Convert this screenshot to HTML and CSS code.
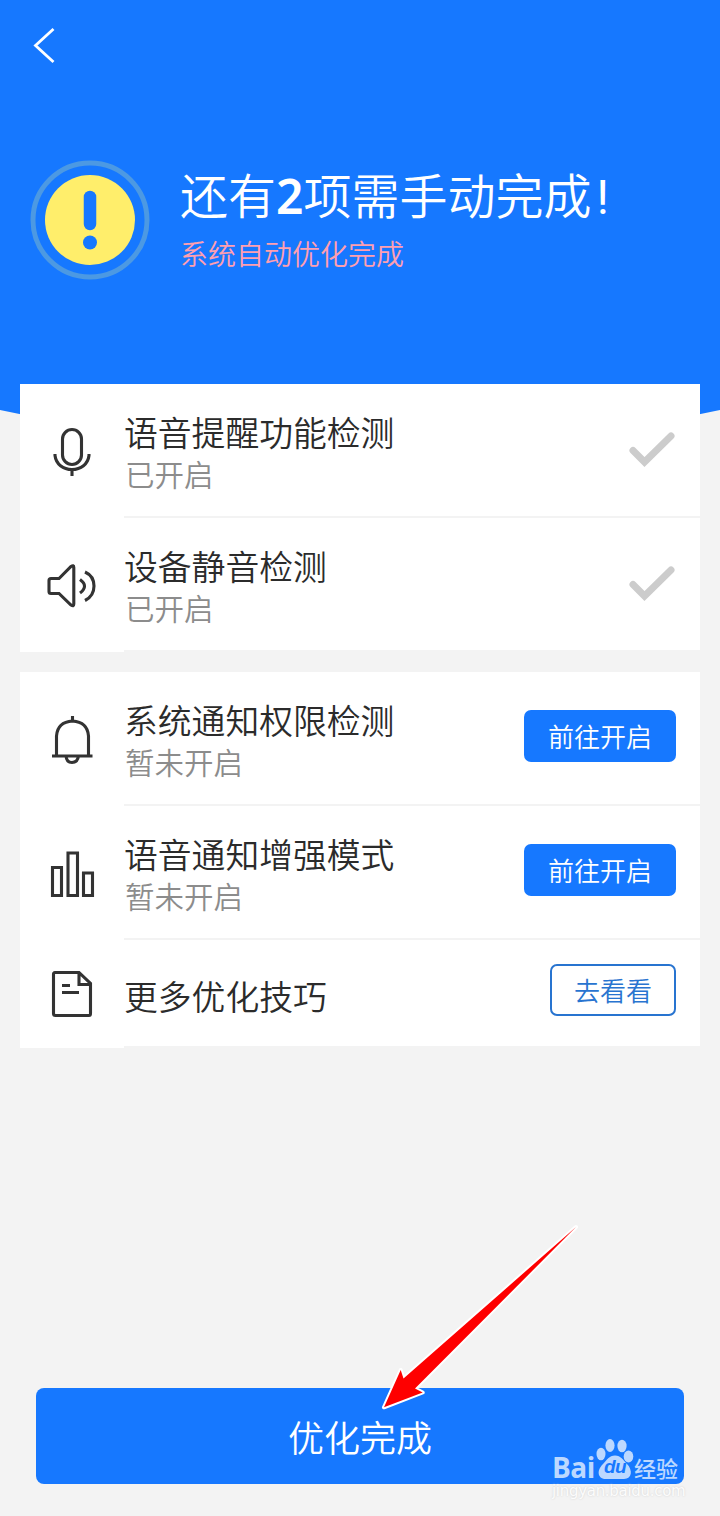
FILE: index.html
```html
<!DOCTYPE html>
<html lang="zh-CN">
<head>
    <meta charset="UTF-8">
    <meta name="viewport" content="width=device-width, initial-scale=1.0">
    <title>优化检测</title>
    <link rel="stylesheet" href="styles.css">
</head>
<body>

    <!-- Header -->
    <div class="header">
        <svg class="curve" viewBox="0 0 720 60" width="720" height="60"><path d="M0 0H720V26Q360 106 0 26Z" fill="#1678ff"/></svg>
        <div class="topbar">
            <svg class="back" width="24" height="38" viewBox="0 0 24 38"><path d="M21.500 2L3.500 18.500L21.500 35" fill="none" stroke="#fff" stroke-width="2.800"/></svg>
        </div>
        <div class="status">
            <svg width="120" height="120" viewBox="0 0 120 120">
                <circle cx="60" cy="60" r="57" fill="none" stroke="#4c99e3" stroke-width="5"/>
                <circle cx="60" cy="60" r="45" fill="#ffee6b"/>
                <path d="M60 37V64" stroke="#1678ff" stroke-width="12.5" stroke-linecap="round"/>
                <circle cx="60" cy="82.5" r="7" fill="#1678ff"/>
            </svg>
            <div class="status-text">
                <h1>还有<b>2</b>项需手动完成<span class="mark">!</span></h1>
                <p>系统自动优化完成</p>
            </div>
        </div>
    </div>

    <!-- Finished checks -->
    <div class="card">
        <div class="row">
            <svg class="icon" viewBox="0 0 56 56">
                <rect x="18.500" y="5.500" width="19" height="35" rx="9.5"/>
                <path d="M11 30V31.500C12 40 19 45.500 28 45.500S44 40 45 31.500V30M28 45.500V52"/>
            </svg>
            <div class="row-body">
                <div class="row-text">
                    <h2>语音提醒功能检测</h2>
                    <p>已开启</p>
                </div>
                <svg class="check" width="46" height="36" viewBox="0 0 46 36"><path d="M4 18.500L15.500 30L42 4"/></svg>
            </div>
        </div>
        <div class="row">
            <svg class="icon" viewBox="0 0 56 56">
                <path d="M5 22.500Q5 20.500 7 20.500H15L27 8.500Q29.800 6.500 29.800 9.500V46Q29.800 49 27 47L15 35.500H7Q5 35.500 5 33.500ZM36 21.500Q45 28 36 35M41 14Q50 18 50 28T41 42.500"/>
            </svg>
            <div class="row-body">
                <div class="row-text">
                    <h2>设备静音检测</h2>
                    <p>已开启</p>
                </div>
                <svg class="check" width="46" height="36" viewBox="0 0 46 36"><path d="M4 18.500L15.500 30L42 4"/></svg>
            </div>
        </div>
    </div>

    <!-- Checks to finish by hand -->
    <div class="card">
        <div class="row">
            <svg class="icon" viewBox="0 0 56 56">
                <path d="M28.500 4V9M12.500 43V24Q13.500 10 28.500 9Q43.500 10 44.500 24V43M8 44H48.500M22 44Q22.500 50.500 28 50.500T34.500 44"/>
            </svg>
            <div class="row-body">
                <div class="row-text">
                    <h2>系统通知权限检测</h2>
                    <p>暂未开启</p>
                </div>
                <button class="btn">前往开启</button>
            </div>
        </div>
        <div class="row">
            <svg class="icon" viewBox="0 0 56 56">
                <path d="M8.500 21.500H17.500V49.500H8.500ZM24 7H33.500V49.500H24ZM39.500 27H48.500V49.500H39.500Z"/>
            </svg>
            <div class="row-body">
                <div class="row-text">
                    <h2>语音通知增强模式</h2>
                    <p>暂未开启</p>
                </div>
                <button class="btn">前往开启</button>
            </div>
        </div>
        <div class="row row-small">
            <svg class="icon" viewBox="0 0 56 56">
                <path d="M11 6.500H35L46.500 17.500V47.500Q46.500 49.500 45 49.500H11.500Q9.500 49.500 9.500 47.500V8.500Q9.500 6.500 11 6.500ZM35 6.500V18.500H46M18 19.500H26M18 26.500H35"/>
            </svg>
            <div class="row-body">
                <div class="row-text">
                    <h2>更多优化技巧</h2>
                </div>
                <button class="btn btn-outline">去看看</button>
            </div>
        </div>
    </div>

    <button class="done">优化完成</button>

    <!-- Pointer to the main button -->
    <svg class="arrow" width="210" height="200" viewBox="0 0 210 200">
        <path d="M198 6L25.500 157.500L22.700 149L6 186.300L44.700 171.500L37 167.500Z"/>
    </svg>

    <!-- Watermark -->
    <div class="watermark">
        <div class="brand">
            <span class="bai">Bai</span>
            <span class="paw">
                <svg width="38" height="42" viewBox="0 0 38 42">
                    <ellipse cx="5" cy="16" rx="4.500" ry="6.300"/>
                    <ellipse cx="14" cy="7.500" rx="4.600" ry="6.500"/>
                    <ellipse cx="26" cy="8" rx="4.600" ry="6.300"/>
                    <ellipse cx="32.500" cy="18.500" rx="4.800" ry="6"/>
                    <path d="M19 17.500C25 17.500 27 22 31 26C37 32 36 41 28 41H10C2 41 0 33 7 26C11 22 13 17.500 19 17.500Z"/>
                </svg>
                <span class="du">du</span>
            </span>
            <span class="jy">经验</span>
        </div>
        <div class="site">jingyan.baidu.com</div>
    </div>

</body>
</html>
```
FILE: styles.css
```css
* {
    box-sizing: border-box;
}
body {
    position: relative;
    display: flex;
    flex-direction: column;
    height: 1516px;
    margin: 0;
    background-color: #f3f3f3;
    font-family: "Noto Sans CJK SC", sans-serif;
    color: #2b2b2b;
    overflow: hidden;
}
h1, h2, p {
    margin: 0;
    font-weight: 350;
}
button {
    border: none;
    padding: 0;
    font-family: inherit;
    font-weight: 350;
    cursor: pointer;
}
svg {
    display: block;
    flex: none;
}
/* Header */
.header {
    position: relative;
    height: 384px;
    flex: none;
    background-color: #1678ff;
    color: #fff;
}
.curve {
    position: absolute;
    top: 384px;
    left: 0;
}
.topbar {
    height: 160px;
    padding: 27px 32px;
}
.status {
    display: flex;
    padding-left: 30px;
    gap: 30px;
}
.status h1 {
    font-size: 48px;
    line-height: 66px;
    white-space: nowrap;
}
.status b {
    font-family: "Noto Sans", sans-serif;
    font-weight: 600;
}
.mark {
    font-family: Roboto, sans-serif;
    font-weight: 400;
    margin-left: 5px;
}
.status p {
    font-size: 28px;
    line-height: 44px;
    color: #ff9fb0;
}
/* Cards */
.card {
    position: relative;
    margin: 0 20px 20px;
    flex: none;
    background-color: #fff;
}
.row {
    display: flex;
    height: 134px;
    padding-left: 24px;
}
.row-small {
    height: 108px;
}
.icon {
    width: 56px;
    height: 56px;
    margin-top: 40px;
    fill: none;
    stroke: #333;
    stroke-width: 3.1;
}
.row-small .icon {
    margin-top: 26px;
}
.row-body {
    display: flex;
    flex: 1;
    justify-content: space-between;
    margin-left: 24px;
    padding-right: 24px;
    border-bottom: 2px solid #f3f3f3;
}
.row-text {
    padding-top: 23px;
}
.row-text h2 {
    font-size: 33.8px;
    line-height: 50px;
}
.row-text p {
    padding-left: 1px;
    font-size: 29.5px;
    line-height: 32px;
    color: #8c8c8c;
}
.row-small .row-text {
    padding-top: 31px;
}
.check {
    margin: 48px 1px 0 0;
    fill: none;
    stroke: #ccc;
    stroke-width: 7;
    stroke-linecap: round;
}
.btn {
    width: 152px;
    height: 52px;
    margin-top: 38px;
    border-radius: 7px;
    background-color: #1678ff;
    color: #fff;
    font-size: 26px;
    line-height: 52px;
}
.btn-outline {
    width: 126px;
    margin-top: 24px;
    border: 2px solid #2874d0;
    background-color: #fff;
    color: #2874d0;
    line-height: 48px;
}
.done {
    height: 96px;
    flex: none;
    margin: auto 36px 32px;
    border-radius: 8px;
    background-color: #1678ff;
    color: #fff;
    font-size: 36px;
}
.arrow {
    position: absolute;
    left: 378px;
    top: 1221px;
    fill: #fe0000;
    stroke: #fff;
    stroke-width: 4;
    stroke-linejoin: round;
    paint-order: stroke;
}
/* Watermark */
.watermark {
    position: absolute;
    left: 552px;
    top: 1438px;
    width: 132px;
}
.brand {
    display: flex;
    height: 44px;
    color: #bcd8ff;
}
.bai {
    width: 44px;
    font: bold 28px/59px "Open Sans", sans-serif;
    letter-spacing: -0.5px;
}
.paw {
    position: relative;
    width: 38px;
    fill: #bcd8ff;
}
.du {
    position: absolute;
    left: 8px;
    top: 17px;
    color: #1678ff;
    font: italic bold 19px/24px "Liberation Sans", sans-serif;
    letter-spacing: -0.5px;
}
.jy {
    font-size: 22px;
    font-weight: 500;
    line-height: 58px;
}
.site {
    font: 15px/18px "DejaVu Sans", sans-serif;
    letter-spacing: -0.3px;
    white-space: nowrap;
    color: #fcfcfc;
    text-shadow: 0 0 2px #ccc;
}
```
